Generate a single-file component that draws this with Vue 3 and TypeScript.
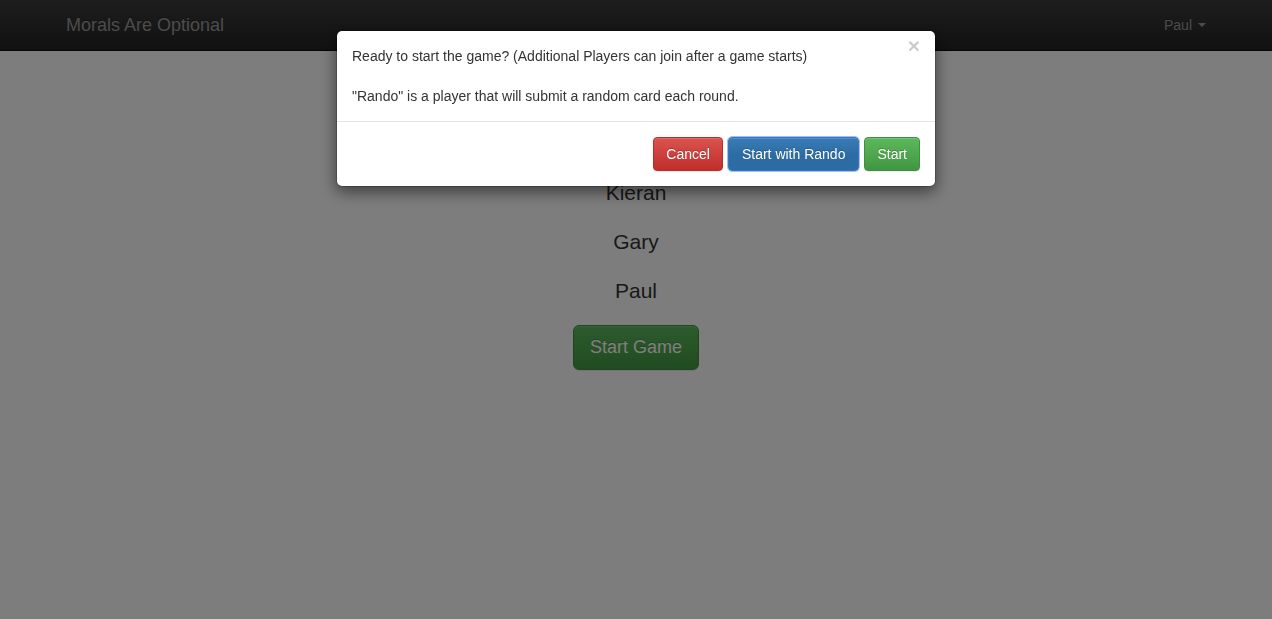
<script setup lang="ts">
import { ref } from 'vue'

const players = ref<string[]>(['Kieran', 'Gary', 'Paul'])
const currentUser = ref('Paul')
const dialogOpen = ref(true)

function closeDialog(): void {
  dialogOpen.value = false
}

function openDialog(): void {
  dialogOpen.value = true
}
</script>

<template>
  <div class="page">
    <header class="navbar">
      <nav class="container">
        <a class="brand" href="#">Morals Are Optional</a>
        <button type="button" class="user-menu" aria-haspopup="true">
          {{ currentUser }}
          <span class="caret"></span>
        </button>
      </nav>
    </header>

    <main class="lobby">
      <p v-for="player in players" :key="player" class="player">{{ player }}</p>
      <button type="button" class="btn btn-large btn-success" @click="openDialog">Start Game</button>
    </main>

    <div v-if="dialogOpen" class="backdrop">
      <section class="dialog" role="dialog" aria-modal="true" aria-labelledby="dialog-text">
        <div class="dialog-body">
          <div id="dialog-text" class="dialog-text">
            <p>Ready to start the game? (Additional Players can join after a game starts)</p>
            <p>"Rando" is a player that will submit a random card each round.</p>
          </div>
          <button type="button" class="close" aria-label="Close" @click="closeDialog">×</button>
        </div>
        <footer class="dialog-footer">
          <button type="button" class="btn btn-danger" @click="closeDialog">Cancel</button>
          <button type="button" class="btn btn-primary" @click="closeDialog">Start with Rando</button>
          <button type="button" class="btn btn-success" @click="closeDialog">Start</button>
        </footer>
      </section>
    </div>
  </div>
</template>

<style>
body {
  margin: 0;
  background: #fafafa;
}
</style>

<style scoped>
.page,
.page * {
  box-sizing: border-box;
}

.page {
  min-height: 100vh;
  font-family: "Liberation Sans", Arial, Helvetica, sans-serif;
  font-size: 14px;
  line-height: 20px;
  color: #333;
}

.navbar {
  border-bottom: 1px solid #080808;
  background: linear-gradient(to bottom, #3c3c3c 0%, #222 100%);
}

.container {
  display: flex;
  justify-content: space-between;
  align-items: center;
  max-width: 1170px;
  height: 50px;
  margin: 0 auto;
  padding: 0 15px;
}

.brand {
  font-size: 18px;
  color: #999;
  text-decoration: none;
  text-shadow: 0 -1px 0 rgba(0, 0, 0, 0.25);
}

.user-menu {
  display: flex;
  align-items: center;
  gap: 6px;
  padding: 0;
  border: 0;
  background: none;
  font: inherit;
  color: #999;
  text-shadow: 0 -1px 0 rgba(0, 0, 0, 0.25);
  cursor: pointer;
}

.caret {
  border-top: 4px solid;
  border-right: 4px solid transparent;
  border-left: 4px solid transparent;
}

.lobby {
  display: flex;
  flex-direction: column;
  align-items: center;
  padding: 127px 15px 20px;
}

.player {
  margin: 0 0 20px;
  font-size: 21px;
  line-height: 29px;
}

.btn {
  padding: 6px 12px;
  border: 1px solid transparent;
  border-radius: 4px;
  font: inherit;
  color: #fff;
  text-shadow: 0 -1px 0 rgba(0, 0, 0, 0.2);
  box-shadow: inset 0 1px 0 rgba(255, 255, 255, 0.15), 0 1px 1px rgba(0, 0, 0, 0.075);
  background-repeat: repeat-x;
  cursor: pointer;
}

.btn-large {
  padding: 10px 16px;
  border-radius: 6px;
  font-size: 18px;
  line-height: 23px;
}

.btn-success {
  border-color: #3e8f3e;
  background-image: linear-gradient(to bottom, #5cb85c 0%, #419641 100%);
}

.btn-danger {
  border-color: #b92c28;
  background-image: linear-gradient(to bottom, #d9534f 0%, #c12e2a 100%);
}

.btn-primary {
  padding: 6px 13px;
  border-color: #3a74c4;
  background-color: #2d6ca2;
  background-image: linear-gradient(to bottom, #387cb7 0, #2d6ca2 17px);
  outline: 1px solid #9dc0f8;
}

.backdrop {
  position: fixed;
  inset: 0;
  padding: 30px 10px;
  overflow: auto;
  background: rgba(0, 0, 0, 0.5);
}

.dialog {
  max-width: 600px;
  margin: 0 auto;
  border: 1px solid rgba(0, 0, 0, 0.2);
  border-radius: 6px;
  background: #fff;
  background-clip: padding-box;
  box-shadow: 0 5px 15px rgba(0, 0, 0, 0.5);
}

.dialog-body {
  display: flex;
  justify-content: space-between;
  align-items: flex-start;
  padding: 15px;
}

.dialog-text {
  display: grid;
  gap: 20px;
}

.dialog-text p {
  margin: 0;
}

.close {
  margin-top: -10px;
  padding: 0;
  border: 0;
  background: none;
  font: inherit;
  font-size: 21px;
  font-weight: 700;
  line-height: 20px;
  color: #000;
  text-shadow: 0 1px 0 #fff;
  opacity: 0.2;
  cursor: pointer;
}

.dialog-footer {
  display: flex;
  justify-content: flex-end;
  gap: 5px;
  padding: 15px;
  border-top: 1px solid #e5e5e5;
}
</style>
